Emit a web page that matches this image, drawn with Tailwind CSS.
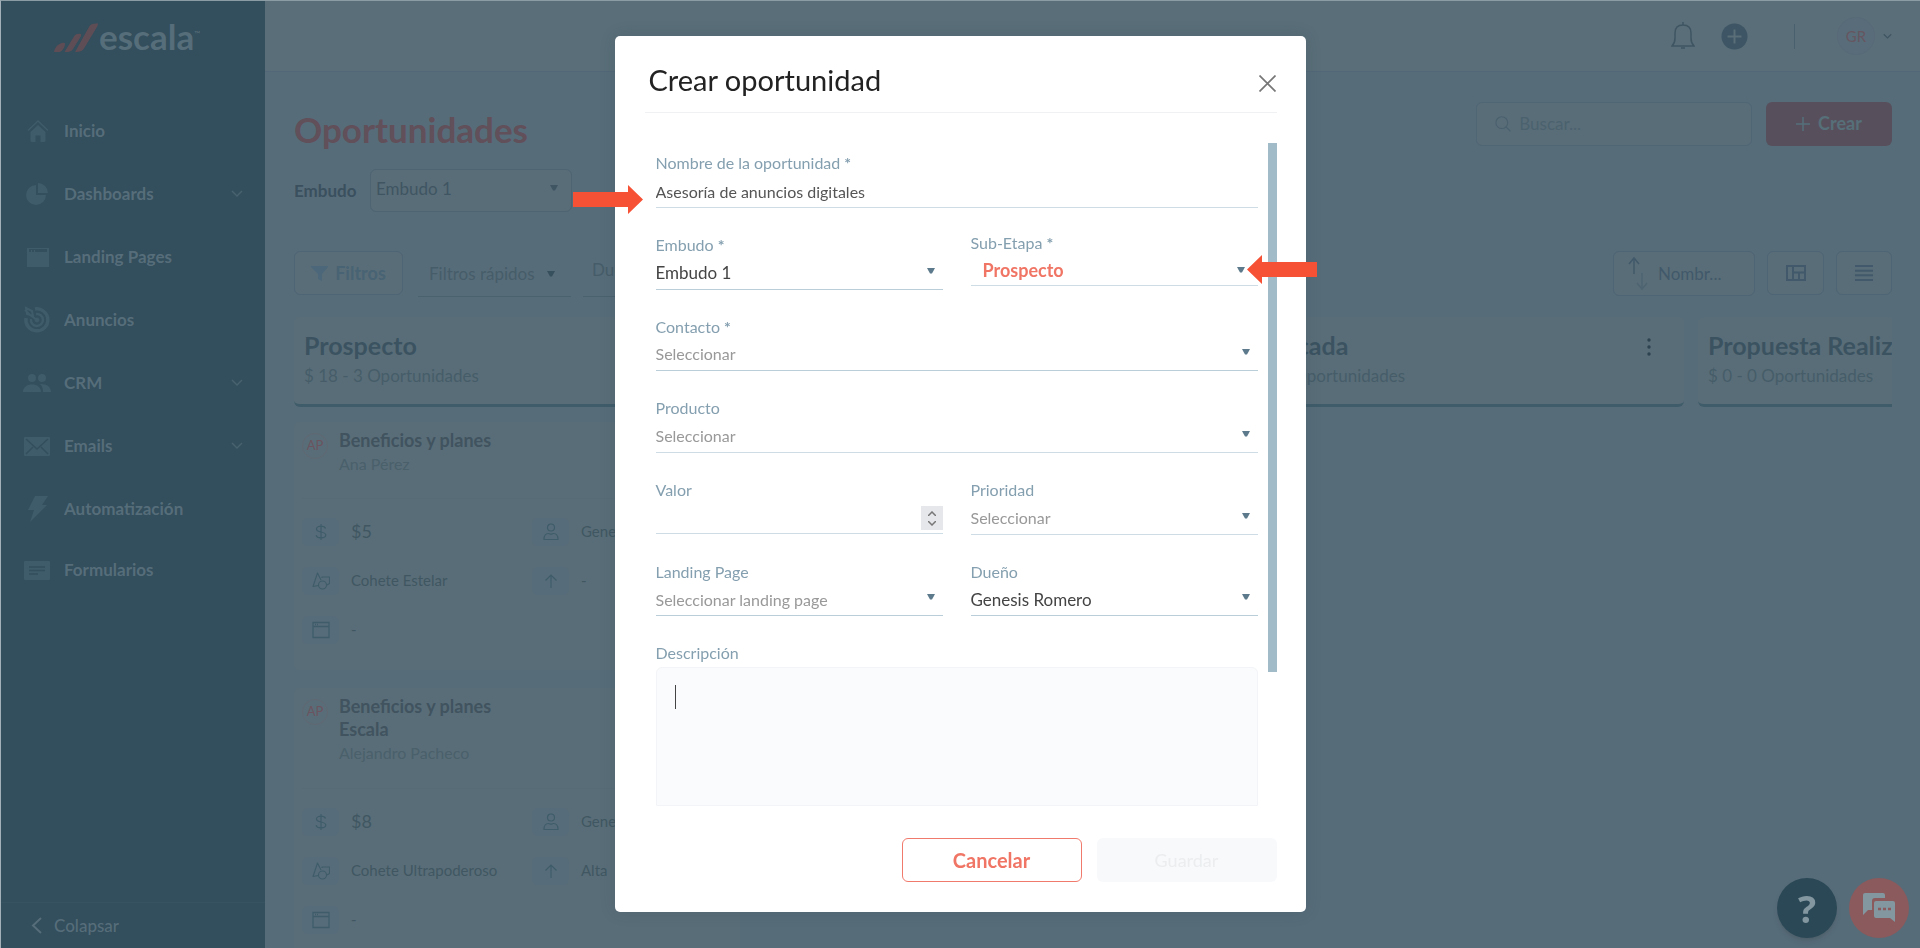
<!DOCTYPE html>
<html lang="es">
<head>
<meta charset="utf-8">
<meta name="viewport" content="width=device-width, initial-scale=1">
<title>Oportunidades</title>
<script src="https://cdn.jsdelivr.net/npm/@tailwindcss/browser@4"></script>
</head>
<body class="font-[Lato,'Noto_Sans',sans-serif] bg-[#576c79] text-[#3f5562] text-base">
<svg class="hidden">
  <symbol id="caret" viewBox="0 0 8 6"><path d="M0 0h8L5 5.500H3z" fill="currentColor"/></symbol>
  <symbol id="down" viewBox="0 0 12 8"><path d="M1 1l5 5 5-5" fill="none" stroke="currentColor" stroke-width="1.500"/></symbol>
  <symbol id="dollar" viewBox="0 0 18 18"><path d="M9 1v16M13.500 5.500C13 4 11.500 3.200 9 3.200S4.500 4.200 4.500 6 6.500 8.500 9 9s4.800 1.200 4.800 3.100-2 2.800-4.800 2.800-4.500-1-4.800-2.700" fill="none" stroke="currentColor" stroke-width="1.200"/></symbol>
  <symbol id="shapes" viewBox="0 0 18 18"><path d="M6.500 13.500L1 14.500 5.500 1l3.500 7M10 6V5h7.500v6.500l-2.500 1.500" fill="none" stroke="currentColor" stroke-width="1.100" stroke-linejoin="round"/><circle cx="10.500" cy="13" r="4" fill="none" stroke="currentColor" stroke-width="1.100"/></symbol>
  <symbol id="window" viewBox="0 0 18 18"><path d="M1 1.500h16v15H1zM1 5.500h16M3 3.500h1M5 3.500h1" fill="none" stroke="currentColor" stroke-width="1.300"/></symbol>
  <symbol id="person" viewBox="0 0 18 18"><circle cx="9" cy="4.500" r="3.500" fill="none" stroke="currentColor" stroke-width="1.200"/><path d="M2 16.500c0-4 2-6 4.500-6 1.500 0 1.500.7 2.500.7s1-.7 2.500-.7c2.500 0 4.500 2 4.500 6z" fill="none" stroke="currentColor" stroke-width="1.200"/></symbol>
  <symbol id="up" viewBox="0 0 18 18"><path d="M9 16V3M3.500 8.500L9 3l5.500 5.500" fill="none" stroke="currentColor" stroke-width="1.200"/></symbol>
</svg>

<div class="flex h-screen overflow-hidden">
  <aside class="flex w-[265px] shrink-0 flex-col border-t border-l border-t-[#8c9ca4] border-l-[#a3b0b7] bg-[#334e5c] text-[#566d7a]">
    <a href="#" class="flex h-[98px] shrink-0 items-start pt-[15px] pl-[53px]" aria-label="escala">
      <svg class="mt-[7px] h-[30px] w-[44px]" viewBox="0 0 44 30" fill="#5f4d56"><path d="M0 29c1-5 4-8 8-9 2-.5 3 0 3 1 0 3-3 8-6 8zM10.500 29L20 13.500c1.500-2.500 4-3 7-2.500.5 1 0 2-.5 3L19 26c-1.500 2.500-4 3.300-8.500 3zM21 29L35 4c1.500-3 4-3.500 9-3.500 0 1-.2 2-.8 3L30 25.500c-1.500 2.500-4 3.500-9 3.500z"/></svg>
      <span class="ml-px text-[35px] leading-[40px] font-bold">escala</span><span class="mt-3 text-[8px] leading-3">™</span>
    </a>
    <nav class="flex flex-1 flex-col text-[17px] font-bold">
      <a href="#" class="flex h-[63px] items-center pr-[22px] pl-[22px]"><svg class="mr-[13px] size-7 text-[#3f5c6a]" viewBox="0 0 28 28" fill="currentColor"><path d="M15 8l7.500 7v8.500A1.500 1.500 0 0121 25h-3.500v-6.500h-5V25H9a1.500 1.500 0 01-1.500-1.500V15z"/><path d="M5 13.500L15 4l10 9.500" fill="none" stroke="currentColor" stroke-width="1.500"/></svg>Inicio</a>
      <a href="#" class="flex h-[63px] items-center pr-[22px] pl-[22px]"><svg class="mr-[13px] size-7 text-[#3f5c6a]" viewBox="0 0 28 28" fill="currentColor"><path d="M13 5v10h10A10 10 0 1113 5z"/><path d="M15 3a10 10 0 0110 10H15z"/></svg><span class="flex-1">Dashboards</span><svg class="h-2 w-3 text-[#48626f]"><use href="#down"/></svg></a>
      <a href="#" class="flex h-[63px] items-center pr-[22px] pl-[22px]"><svg class="mr-[13px] size-7 text-[#3f5c6a]" viewBox="0 0 28 28" fill="currentColor"><path d="M4 5h22v1H4zM4 9h22v15H4zM4 6h2v3H4zM8 7h1v2H8zM11 7h1v2h-1zM24 6h2v3h-2z"/></svg>Landing Pages</a>
      <a href="#" class="flex h-[63px] items-center pr-[22px] pl-[22px]"><svg class="mr-[13px] size-7 text-[#3f5c6a]" viewBox="0 0 28 28" fill="none" stroke="currentColor"><path d="M12 3a11 11 0 11-9 9" stroke-width="3.500"/><path d="M13 8a6 6 0 11-5 5" stroke-width="2.500"/><circle cx="14" cy="14" r="2" fill="currentColor"/><path d="M2 4l5 5 7 5M3 2l6 3 1 5-6-2z" stroke-width="2"/></svg>Anuncios</a>
      <a href="#" class="flex h-[63px] items-center pr-[22px] pl-[22px]"><svg class="mr-[13px] size-7 text-[#3f5c6a]" viewBox="0 0 28 28" fill="currentColor"><circle cx="9" cy="9" r="4"/><circle cx="19" cy="9" r="4"/><path d="M0 23c0-5 4-7.500 9-7.500s9 2.500 9 7.500zM17 15c6-.5 11 2.500 11 8h-8c0-4-1-6-3-8z"/></svg><span class="flex-1">CRM</span><svg class="h-2 w-3 text-[#48626f]"><use href="#down"/></svg></a>
      <a href="#" class="flex h-[63px] items-center pr-[22px] pl-[22px]"><svg class="mr-[13px] size-7 text-[#3f5c6a]" viewBox="0 0 28 28"><rect x="1" y="5" width="26" height="19" rx="1" fill="currentColor"/><path d="M3 7l11 10L25 7M3 22l7-7M25 22l-7-7" fill="none" stroke="#334e5c" stroke-width="1.500"/></svg><span class="flex-1">Emails</span><svg class="h-2 w-3 text-[#48626f]"><use href="#down"/></svg></a>
      <a href="#" class="flex h-[63px] items-center pr-[22px] pl-[22px]"><svg class="mr-[13px] size-7 text-[#3f5c6a]" viewBox="0 0 28 28" fill="currentColor"><path d="M12 1h13l-6 9h5L7 27l4-12H5z"/></svg>Automatización</a>
      <a href="#" class="flex h-[60px] items-center pr-[22px] pl-[22px]"><svg class="mr-[13px] size-7 text-[#3f5c6a]" viewBox="0 0 28 28"><rect x="1" y="5" width="26" height="19" rx="1" fill="currentColor"/><path d="M6 11h16M6 14.500h16M6 18h9" stroke="#334e5c" stroke-width="1.500"/></svg>Formularios</a>
    </nav>
    <button class="flex h-[46px] items-center gap-3 border-t border-[#375261] pl-[30px] text-[17px] font-medium"><svg class="h-[17px] w-[11px]" viewBox="0 0 11 17" fill="none" stroke="currentColor" stroke-width="2"><path d="M10 1L2 8.500 10 16"/></svg>Colapsar</button>
  </aside>

  <div class="flex min-w-0 flex-1 flex-col">
    <header class="flex h-[72px] shrink-0 items-center justify-end border-t border-b border-t-[#8c9ca4] border-b-[#526878] bg-[#596e78] pr-[28px]">
      <button aria-label="Notificaciones"><svg class="h-7 w-6" viewBox="0 0 24 28" fill="none" stroke="#3f5562" stroke-width="1.500"><path d="M1 24c2-2 3-4 3-8v-5c0-5 3-8 8-8s8 3 8 8v5c0 4 1 6 3 8zM12 3V0M10 26h4"/></svg></button>
      <button class="ml-[26px]" aria-label="Agregar"><svg class="size-[27px]" viewBox="0 0 27 27"><circle cx="13.500" cy="13.500" r="13" fill="#3d5564"/><path d="M13.500 6.500v14M6.500 13.500h14" stroke="#5a6e78" stroke-width="2"/></svg></button>
      <span class="ml-[46px] h-[25px] w-px bg-[#49606d]"></span>
      <button class="ml-[42px] flex items-center gap-2"><span class="flex size-[38px] items-center justify-center rounded-full border border-[#586979] bg-[#586d79] text-[15px] text-[#665661]">GR</span><svg class="h-[7px] w-[9px]"><use href="#down"/></svg></button>
    </header>

    <main class="flex min-h-0 flex-1 flex-col overflow-hidden pr-[28px] pl-[29px]">
      <div class="mt-[29px] flex h-[45px] shrink-0 items-center">
        <h1 class="flex-1 pt-[10px] text-[35px] leading-10 font-bold text-[#614f59]">Oportunidades</h1>
        <label class="mr-[14px] flex h-11 w-[276px] items-center rounded-md border border-[#4f6675] bg-[#596d78] pl-[18px]">
          <svg class="mr-2 size-[18px]" viewBox="0 0 18 18" fill="none" stroke="#4a616e" stroke-width="1.300"><circle cx="7.500" cy="7.500" r="6.500"/><path d="M12 12l5 5"/></svg>
          <input type="search" aria-label="Buscar" placeholder="Buscar..." class="w-full bg-transparent text-[17px] outline-none placeholder:text-[#4b626e]">
        </label>
        <button class="flex h-11 w-[126px] items-center justify-center gap-2 rounded-md bg-[#57505c] text-[18px] font-bold text-[#566f79]"><svg class="size-[14px]" viewBox="0 0 14 14" stroke="currentColor" stroke-width="1.500"><path d="M7 0v14M0 7h14"/></svg>Crear</button>
      </div>

      <div class="mt-[23px] flex h-[43px] shrink-0 items-center">
        <label for="pipeline" class="w-[76px] text-[17px] font-bold text-[#3a505e]">Embudo</label>
        <div class="relative flex h-[43px] w-[202px] rounded-md border border-[#4e6472] bg-[#596d78]">
          <select id="pipeline" class="w-full appearance-none bg-transparent pb-1 pl-[5px] text-[17px] outline-none"><option>Embudo 1</option></select>
          <svg class="pointer-events-none absolute top-[15px] right-[13px] h-[6px] w-2"><use href="#caret"/></svg>
        </div>
      </div>

      <div class="mt-[39px] flex h-[46px] shrink-0 items-start">
        <button class="flex h-11 w-[109px] items-center justify-center gap-[7px] rounded-md border border-[#4e6575] bg-[#596d78] text-[18px] font-bold text-[#486373]"><svg class="size-[17px] text-[#4b6779]" viewBox="0 0 17 17" fill="currentColor"><path d="M0 1h17v1l-6 7v7l-4-2V9L0 2z"/></svg>Filtros</button>
        <button class="ml-[15px] flex h-[46px] w-[153px] items-center justify-between border-b border-[#4a616e] pr-4 pl-[11px] text-[17px] text-[#465d69]">Filtros rápidos<svg class="h-[6px] w-2 text-[#37505d]"><use href="#caret"/></svg></button>
        <button class="ml-3 flex h-[46px] w-[153px] items-center justify-between border-b border-[#4a616e] pr-4 pb-2 pl-[9px] text-[17px] text-[#465d69]">Dueño<svg class="h-[6px] w-2 text-[#37505d]"><use href="#caret"/></svg></button>
        <div class="flex flex-1 justify-end gap-3 text-[#41596a]">
          <button class="flex h-[45px] w-[142px] items-center rounded-md border border-[#4e6575] bg-[#596d78] pl-[14px] text-[17px]"><svg class="mr-[10px] h-9 w-5" viewBox="0 0 20 36" fill="none" stroke-width="1.500"><path d="M6 18V2M1 8l5-6 5 6" stroke="#41596a"/><path d="M14 17v16M9 27l5 6 5-6" stroke="#4e6571"/></svg>Nombr...</button>
          <button aria-label="Tablero" class="flex h-11 w-[57px] items-center justify-center rounded-md border border-[#4e6575] bg-[#596d78]"><svg class="h-4 w-5" viewBox="0 0 20 16" fill="none" stroke="currentColor" stroke-width="2"><path d="M1 1h18v14H1zM7 1v14M7 7.500h12M13 7.500V15"/></svg></button>
          <button aria-label="Lista" class="flex h-11 w-[56px] items-center justify-center rounded-md border border-[#4e6575] bg-[#596d78]"><svg class="h-4 w-[18px]" viewBox="0 0 18 16" stroke="currentColor" stroke-width="2"><path d="M0 1h18M0 5.700h18M0 10.300h18M0 15h18"/></svg></button>
        </div>
      </div>

      <div class="mt-5 flex min-h-0 flex-1 gap-[14px] overflow-hidden">
        <section class="w-[454px] shrink-0">
          <header class="h-[90px] rounded-md border-b-[3px] border-[#3f5c6a] bg-[#596d78] px-[10px] pt-[14px]">
            <h2 class="text-[25px] leading-7 font-bold text-[#3b5361]">Prospecto</h2>
            <p class="pt-[5px] text-[17px] leading-6 text-[#465d69]">$ 18 - 3 Oportunidades</p>
          </header>
          <article class="mt-[15px] h-[248px] w-[446px] rounded-md bg-[#596d78] px-2 pt-[7px]">
            <div class="flex h-[70px] gap-[11px] border-b border-[#566b76]">
              <span class="mt-1 flex size-[26px] shrink-0 items-center justify-center rounded-full border border-[#606872] text-[13px] text-[#6b545f]">AP</span>
              <div><h3 class="w-[180px] text-[18px] leading-[23px] font-bold text-[#40535f]">Beneficios y planes</h3><p class="text-base leading-6 text-[#4a606b]">Ana Pérez</p></div>
            </div>
            <dl class="mt-2 grid grid-cols-[230px_1fr] text-[15px] text-[#405762]">
              <div class="flex h-[49px] items-center gap-3"><dt class="flex h-7 w-[37px] items-center justify-center rounded-md bg-[#576c7a]"><svg class="size-[18px] text-[#3e5c6a]"><use href="#dollar"/></svg></dt><dd class="text-[18px]">$5</dd></div>
              <div class="flex h-[49px] items-center gap-3"><dt class="flex h-7 w-[37px] items-center justify-center rounded-md bg-[#576c7a]"><svg class="size-[18px] text-[#3e5c6a]"><use href="#person"/></svg></dt><dd>Genesis Romero</dd></div>
              <div class="flex h-[49px] items-center gap-3"><dt class="flex h-7 w-[37px] items-center justify-center rounded-md bg-[#576c7a]"><svg class="size-[18px] text-[#3e5c6a]"><use href="#shapes"/></svg></dt><dd>Cohete Estelar</dd></div>
              <div class="flex h-[49px] items-center gap-3"><dt class="flex h-7 w-[37px] items-center justify-center rounded-md bg-[#576c7a]"><svg class="size-[18px] text-[#3e5c6a]"><use href="#up"/></svg></dt><dd>-</dd></div>
              <div class="flex h-[49px] items-center gap-3"><dt class="flex h-7 w-[37px] items-center justify-center rounded-md bg-[#576c7a]"><svg class="size-[18px] text-[#3e5c6a]"><use href="#window"/></svg></dt><dd>-</dd></div>
            </dl>
          </article>
          <article class="mt-[18px] h-[272px] w-[446px] rounded-md bg-[#596d78] px-2 pt-[7px]">
            <div class="flex h-[94px] gap-[11px] border-b border-[#566b76]">
              <span class="mt-1 flex size-[26px] shrink-0 items-center justify-center rounded-full border border-[#606872] text-[13px] text-[#6b545f]">AP</span>
              <div><h3 class="w-[180px] text-[18px] leading-[23px] font-bold text-[#40535f]">Beneficios y planes Escala</h3><p class="text-base leading-6 text-[#4a606b]">Alejandro Pacheco</p></div>
            </div>
            <dl class="mt-2 grid grid-cols-[230px_1fr] text-[15px] text-[#405762]">
              <div class="flex h-[49px] items-center gap-3"><dt class="flex h-7 w-[37px] items-center justify-center rounded-md bg-[#576c7a]"><svg class="size-[18px] text-[#3e5c6a]"><use href="#dollar"/></svg></dt><dd class="text-[18px]">$8</dd></div>
              <div class="flex h-[49px] items-center gap-3"><dt class="flex h-7 w-[37px] items-center justify-center rounded-md bg-[#576c7a]"><svg class="size-[18px] text-[#3e5c6a]"><use href="#person"/></svg></dt><dd>Genesis Romero</dd></div>
              <div class="flex h-[49px] items-center gap-3"><dt class="flex h-7 w-[37px] items-center justify-center rounded-md bg-[#576c7a]"><svg class="size-[18px] text-[#3e5c6a]"><use href="#shapes"/></svg></dt><dd>Cohete Ultrapoderoso</dd></div>
              <div class="flex h-[49px] items-center gap-3"><dt class="flex h-7 w-[37px] items-center justify-center rounded-md bg-[#576c7a]"><svg class="size-[18px] text-[#3e5c6a]"><use href="#up"/></svg></dt><dd>Alta</dd></div>
              <div class="flex h-[49px] items-center gap-3"><dt class="flex h-7 w-[37px] items-center justify-center rounded-md bg-[#576c7a]"><svg class="size-[18px] text-[#3e5c6a]"><use href="#window"/></svg></dt><dd>-</dd></div>
            </dl>
          </article>
        </section>
        <section class="w-[454px] shrink-0"><header class="h-[90px] rounded-md border-b-[3px] border-[#3f5c6a] bg-[#596d78]"></header></section>
        <section class="w-[454px] shrink-0">
          <header class="flex h-[90px] items-start justify-between rounded-md border-b-[3px] border-[#3f5c6a] bg-[#596d78] pt-[14px] pr-[33px] pl-[10px]">
            <div><h2 class="text-[25px] leading-7 font-bold text-[#3b5361]">Calificada</h2>
            <p class="pt-[5px] text-[17px] leading-6 text-[#465d69]">$ 0 - 0 Oportunidades</p></div>
            <button aria-label="Más opciones" class="mt-[6px]"><svg class="h-5 w-1" viewBox="0 0 4 20" fill="#2d4350"><circle cx="2" cy="3" r="1.700"/><circle cx="2" cy="10" r="1.700"/><circle cx="2" cy="17" r="1.700"/></svg></button>
          </header>
        </section>
        <section class="w-[454px] shrink-0">
          <header class="h-[90px] rounded-md border-b-[3px] border-[#3f5c6a] bg-[#596d78] px-[10px] pt-[14px]">
            <h2 class="text-[25px] leading-7 font-bold text-[#3b5361]">Propuesta Realizada</h2>
            <p class="pt-[5px] text-[17px] leading-6 text-[#465d69]">$ 0 - 0 Oportunidades</p>
          </header>
        </section>
      </div>
    </main>
  </div>
</div>

<div class="fixed right-[11px] bottom-[10px] flex gap-3">
  <button aria-label="Ayuda" class="flex size-[60px] items-center justify-center rounded-full bg-[#2b4857] font-['Open_Sans',sans-serif] text-[38px] font-bold text-[#8397a0] shadow-md">?</button>
  <button aria-label="Chat" class="flex size-[60px] items-center justify-center rounded-full bg-[#8a5a5d]"><svg class="h-[30px] w-8" viewBox="0 0 32 30"><path d="M2 0h18a2 2 0 012 2v3H12a3 3 0 00-3 3v9H5l-5 5V2a2 2 0 012-2z" fill="#8397a0"/><path d="M13 8h17a2 2 0 012 2v19l-5-4H13a2 2 0 01-2-2V10a2 2 0 012-2z" fill="#8397a0"/><path d="M15 16h3M20 16h3M25 16h3" stroke="#8a5a5d" stroke-width="2.500"/></svg></button>
</div>

<div class="fixed inset-0 flex items-center justify-center">
  <div role="dialog" aria-modal="true" aria-labelledby="dlg" class="relative flex w-[691px] flex-col rounded-[5px] bg-white pr-[29px] pb-[30px] pl-[30px] shadow-[0_0_16px_rgba(40,60,75,0.15)]">
    <header class="flex h-[77px] items-center justify-between border-b border-[#eff1f3] pt-3 pr-px pl-1">
      <h2 id="dlg" class="text-[29px] leading-9 text-[#222]">Crear oportunidad</h2>
      <button aria-label="Cerrar"><svg class="mt-[6px] size-[17px]" viewBox="0 0 17 17" stroke="#777" stroke-width="1.700"><path d="M.5.5l16 16M16.500.5l-16 16"/></svg></button>
    </header>
    <form id="opp" class="mt-[30px] flex h-[665px] items-start justify-between overflow-hidden">
      <div class="ml-[11px] grid w-[602px] grid-cols-2 gap-x-[28px] gap-y-[27px] pt-[10px] text-base text-[#444]">
        <div class="col-span-2 flex h-[55px] flex-col border-b border-[#cddce5]">
          <label for="nombre" class="leading-5 text-[#849faf]">Nombre de la oportunidad <b>*</b></label>
          <input id="nombre" value="Asesoría de anuncios digitales" class="min-h-0 flex-1 pt-1 text-[#555] outline-none">
        </div>
        <div class="relative flex h-[55px] flex-col border-b border-[#b9ced9]">
          <label for="embudo" class="leading-5 text-[#849faf]">Embudo <b>*</b></label>
          <select id="embudo" class="min-h-0 flex-1 appearance-none pt-px text-[17px] outline-none"><option>Embudo 1</option></select>
          <svg class="pointer-events-none absolute right-[8px] bottom-[15px] h-[6px] w-2 text-[#5c7a8b]"><use href="#caret"/></svg>
        </div>
        <div class="relative flex h-[51px] flex-col border-b border-[#cddce5]">
          <label for="etapa" class="leading-4 text-[#849faf]">Sub-Etapa <b>*</b></label>
          <select id="etapa" class="min-h-0 flex-1 appearance-none pt-1 pl-3 text-[18px] font-bold text-[#f07565] outline-none"><option>Prospecto</option></select>
          <svg class="pointer-events-none absolute right-[13px] bottom-[12px] h-[6px] w-2 text-[#5c7a8b]"><use href="#caret"/></svg>
        </div>
        <div class="relative col-span-2 flex h-[54px] flex-col border-b border-[#b9ced9]">
          <label for="contacto" class="leading-5 text-[#849faf]">Contacto <b>*</b></label>
          <select id="contacto" class="min-h-0 flex-1 appearance-none text-[#999] outline-none"><option>Seleccionar</option></select>
          <svg class="pointer-events-none absolute right-[8px] bottom-[15px] h-[6px] w-2 text-[#5c7a8b]"><use href="#caret"/></svg>
        </div>
        <div class="relative col-span-2 flex h-[55px] flex-col border-b border-[#cddce5]">
          <label for="producto" class="leading-5 text-[#849faf]">Producto</label>
          <select id="producto" class="min-h-0 flex-1 appearance-none pt-px text-[#999] outline-none"><option>Seleccionar</option></select>
          <svg class="pointer-events-none absolute right-[8px] bottom-[15px] h-[6px] w-2 text-[#5c7a8b]"><use href="#caret"/></svg>
        </div>
        <div class="relative flex h-[54px] flex-col border-b border-[#cddce5]">
          <label for="valor" class="leading-5 text-[#849faf]">Valor</label>
          <input id="valor" type="number" class="min-h-0 flex-1 [appearance:textfield] outline-none">
          <span class="absolute right-0 bottom-[3px] flex h-6 w-[22px] flex-col items-center justify-center gap-[5px] bg-[#e6e7eb] text-[#777]"><svg class="h-[5px] w-2" viewBox="0 0 8 5" fill="none" stroke="currentColor" stroke-width="1.500"><path d="M0 5l4-4 4 4"/></svg><svg class="h-[5px] w-2" viewBox="0 0 8 5" fill="none" stroke="currentColor" stroke-width="1.500"><path d="M0 0l4 4 4-4"/></svg></span>
        </div>
        <div class="relative flex h-[55px] flex-col border-b border-[#cddce5]">
          <label for="prioridad" class="leading-5 text-[#849faf]">Prioridad</label>
          <select id="prioridad" class="min-h-0 flex-1 appearance-none pt-px text-[#999] outline-none"><option>Seleccionar</option></select>
          <svg class="pointer-events-none absolute right-[8px] bottom-[15px] h-[6px] w-2 text-[#5c7a8b]"><use href="#caret"/></svg>
        </div>
        <div class="relative flex h-[54px] flex-col border-b border-[#b9ced9]">
          <label for="landing" class="leading-5 text-[#849faf]">Landing Page</label>
          <select id="landing" class="min-h-0 flex-1 appearance-none pt-[3px] text-[#999] outline-none"><option>Seleccionar landing page</option></select>
          <svg class="pointer-events-none absolute right-[8px] bottom-[15px] h-[6px] w-2 text-[#5c7a8b]"><use href="#caret"/></svg>
        </div>
        <div class="relative flex h-[54px] flex-col border-b border-[#b9ced9]">
          <label for="dueno" class="leading-5 text-[#849faf]">Dueño</label>
          <select id="dueno" class="min-h-0 flex-1 appearance-none pt-[3px] text-[17px] outline-none"><option>Genesis Romero</option></select>
          <svg class="pointer-events-none absolute right-[8px] bottom-[15px] h-[6px] w-2 text-[#5c7a8b]"><use href="#caret"/></svg>
        </div>
        <div class="relative col-span-2 flex flex-col">
          <label for="desc" class="leading-5 text-[#849faf]">Descripción</label>
          <textarea id="desc" class="mt-1 h-[139px] resize-none rounded-t-md border border-[#f3f4f7] bg-[#fafbfc] p-4 outline-none"></textarea>
          <span class="absolute top-[42px] left-[19px] h-6 w-px bg-[#444]"></span>
        </div>
      </div>
      <div class="h-[529px] w-[9px] bg-[#a2bbc9]"></div>
    </form>
    <footer class="mt-[30px] flex justify-end gap-[15px]">
      <button class="h-11 w-[180px] rounded-md border border-[#f07a6c] text-[20px] font-bold text-[#f07565]">Cancelar</button>
      <button disabled class="h-11 w-[180px] rounded-md bg-[#f8f9fb] text-lg text-[#ebedef]">Guardar</button>
    </footer>

    <svg class="absolute top-[149px] left-[-42px] h-[29px] w-[70px]" viewBox="0 0 70 29" fill="#f65035" aria-hidden="true"><path d="M0 7h55V0l15 14.500L55 29v-7H0z"/></svg>
    <svg class="absolute top-[219px] right-[-11px] h-[29px] w-[70px]" viewBox="0 0 70 29" fill="#f65035" aria-hidden="true"><path d="M70 7H15V0L0 14.500 15 29v-7h55z"/></svg>
  </div>
</div>
</body>
</html>
